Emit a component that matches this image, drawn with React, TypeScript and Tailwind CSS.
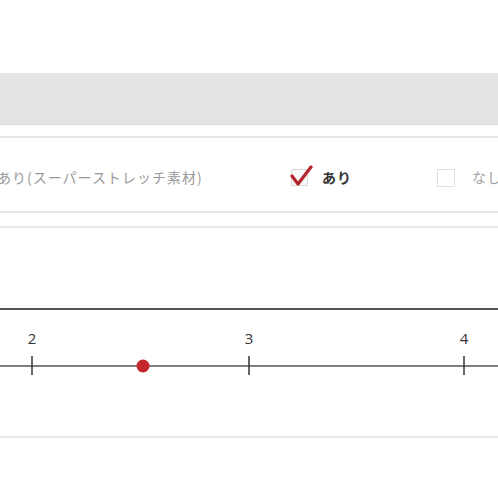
import React from 'react';

const ticks = [
  { label: '2', x: 32 },
  { label: '3', x: 249 },
  { label: '4', x: 464 },
];

const CheckedBox = () => (
  <div className="relative shrink-0 w-[17px] h-[17px] border border-[#dcdcdc] bg-[#f7f7f7]">
    <svg className="absolute -left-[2px] -top-[6px]" width="24" height="24" viewBox="0 0 24 24">
      <path d="M2 12 L8 20 L21 3" fill="none" stroke="#b3262b" strokeWidth="3.2" strokeLinecap="round" strokeLinejoin="round" />
    </svg>
  </div>
);

export default function App() {
  return (
    <div className="w-[498px] h-[498px] bg-white overflow-hidden" style={{ fontFamily: '"Noto Sans CJK JP", "Noto Sans", sans-serif' }}>
      <div className="h-[73px]" />
      <div className="h-[52px] bg-[#e4e4e4] border-b border-[#d9d9d9]" />

      {/* option row */}
      <div className="mt-[11px] h-[77px] pt-[6px] border-y-2 border-[#e6e6e6] flex items-center text-[14px]">
        <span className="shrink-0 -ml-[3px] w-[294px] text-[#9a9a9a] tracking-[1px] whitespace-nowrap">あり(スーパーストレッチ素材)</span>
        <CheckedBox />
        <span className="shrink-0 ml-[14px] w-[115px] font-bold text-[#333] tracking-[1px]">あり</span>
        <div className="shrink-0 w-[18px] h-[18px] border border-[#e0e0e0]" />
        <span className="shrink-0 ml-[17px] text-[#a0a0a0] whitespace-nowrap tracking-[1px]">なし</span>
      </div>

      <div className="mt-[13px] h-[82px] border-t-2 border-[#e8e8e8]" />

      {/* scale */}
      <div className="h-[130px] border-t-2 border-[#555] border-b-2 border-b-[#e8e8e8]">
        <svg width="498" height="126" viewBox="0 0 498 126">
          <line x1="0" y1="56" x2="498" y2="56" stroke="#555" strokeWidth="1.5" />
          {ticks.map(t => (
            <g key={t.label}>
              <line x1={t.x} y1="46" x2={t.x} y2="65" stroke="#333" strokeWidth="1.5" />
              <text x={t.x} y="34" textAnchor="middle" fontSize="15" fill="#333" fontFamily="'Open Sans', sans-serif">{t.label}</text>
            </g>
          ))}
          <circle cx="143" cy="56" r="6.5" fill="#c2282b" />
        </svg>
      </div>
    </div>
  );
}
